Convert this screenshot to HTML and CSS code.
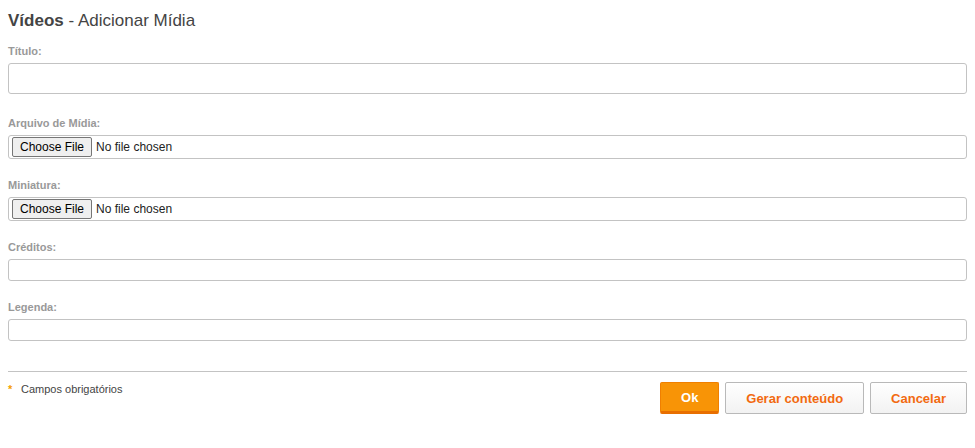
FILE: index.html
```html
<!DOCTYPE html>
<html lang="pt">
<head>
<meta charset="utf-8">
<title>Vídeos - Adicionar Mídia</title>
<link rel="stylesheet" href="styles.css">
</head>
<body>
<div class="page">
  <h1 class="title"><strong>Vídeos</strong> - Adicionar Mídia</h1>
  <form class="form">
    <div class="field field-first">
      <label class="label">Título:</label>
      <input class="text text-lg" type="text">
    </div>
    <div class="field">
      <label class="label">Arquivo de Mídia:</label>
      <div class="file"><span class="file-btn">Choose File</span><span class="file-name">No file chosen</span></div>
    </div>
    <div class="field">
      <label class="label">Miniatura:</label>
      <div class="file"><span class="file-btn">Choose File</span><span class="file-name">No file chosen</span></div>
    </div>
    <div class="field">
      <label class="label">Créditos:</label>
      <input class="text" type="text">
    </div>
    <div class="field">
      <label class="label">Legenda:</label>
      <input class="text" type="text">
    </div>
    <div class="footer">
      <div class="required"><span class="star">*</span>Campos obrigatórios</div>
      <div class="actions">
        <button type="button" class="btn btn-primary">Ok</button>
        <button type="button" class="btn">Gerar conteúdo</button>
        <button type="button" class="btn">Cancelar</button>
      </div>
    </div>
  </form>
</div>
</body>
</html>
```

FILE: styles.css
```css
* { box-sizing: border-box; }
html, body { margin: 0; padding: 0; background: #fff; }
body { font-family: "Liberation Sans", Arial, sans-serif; color: #444; }
.page { padding: 9px 8px 0 8px; width: 975px; }
.title { margin: 0; font-size: 17px; font-weight: normal; line-height: 23px; color: #444; }
.title strong { font-weight: bold; }
.form { margin: 0; }
.field { display: flex; flex-direction: column; margin-top: 19px; }
.field-first { margin-top: 12px; }
.label { font-size: 11px; font-weight: bold; color: #999; line-height: 14px; margin-bottom: 5px; }
.text { width: 959px; height: 22px; border: 1px solid #c3c3c3; border-radius: 3px; padding: 0 6px; font: inherit; background: #fff; outline: none; }
.text-lg { height: 31px; }
.field-first + .field { margin-top: 22px; }
.file { width: 959px; height: 24px; border: 1px solid #c3c3c3; border-radius: 3px; display: flex; align-items: center; padding-left: 3px; font-size: 12px; color: #222; }
.file-btn { height: 20px; padding: 0 7px; display: inline-flex; align-items: center; background: #efefef; border: 1px solid #767676; border-radius: 2px; color: #000; font-size: 12px; }
.file-name { margin-left: 4px; color: #222; }
.footer { margin-top: 30px; border-top: 1px solid #c3c3c3; width: 959px; display: flex; justify-content: space-between; padding-top: 10px; }
.required { font-size: 11px; color: #444; line-height: 14px; display: flex; align-items: flex-start; }
.star { color: #f5a000; font-size: 11px; line-height: 14px; width: 13px; font-weight: bold; }
.actions { display: flex; gap: 6px; }
.btn { height: 32px; font-family: "Liberation Sans", Arial, sans-serif; font-size: 13px; font-weight: bold; color: #f26a10; background: linear-gradient(#fff, #f2f2f2); border: 1px solid #b9b9b9; border-radius: 2px; padding: 0 20px; cursor: pointer; }
.btn-primary { background: #f89406; color: #fff; border: 1px solid #f07f00; border-bottom: 3px solid #e86f00; width: 59px; padding: 0; }
```
